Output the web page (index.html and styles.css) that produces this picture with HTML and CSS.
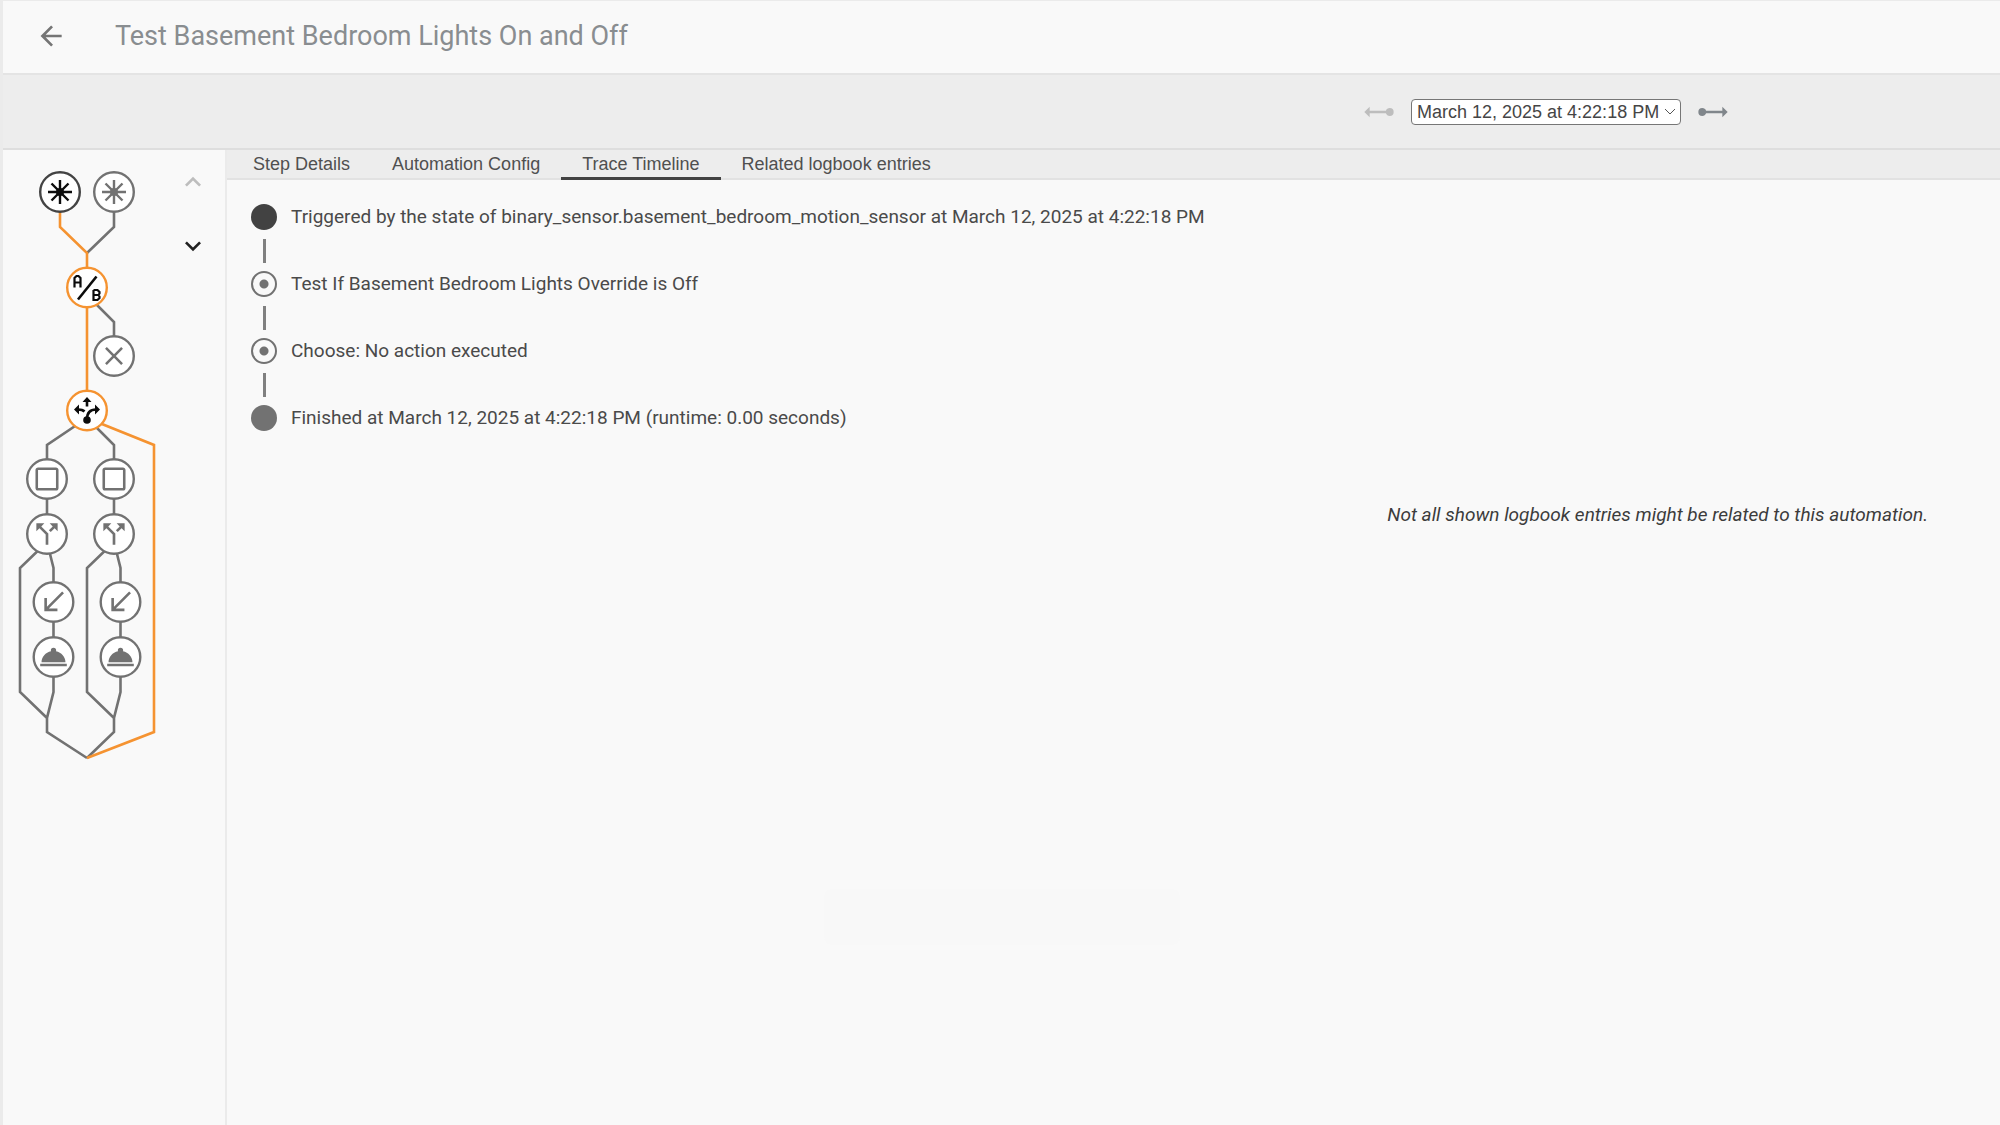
FILE: index.html
```html
<!DOCTYPE html>
<html lang="en">
<head>
<meta charset="utf-8">
<title>Test Basement Bedroom Lights On and Off</title>
<link rel="stylesheet" href="styles.css">
</head>
<body>
<svg class="defs" aria-hidden="true">
  <defs>
    <g id="asterisk"><path d="M0-12V12M-12 0H12M-8.500-8.500L8.500 8.500M8.500-8.500L-8.500 8.500" fill="none" stroke="currentColor" stroke-width="2.4"/><circle r="4" fill="currentColor"/></g>
    <g id="square" transform="scale(1.28) translate(-12 -12)"><path fill="currentColor" d="M19,3H5C3.89,3 3,3.89 3,5V19A2,2 0 0,0 5,21H19A2,2 0 0,0 21,19V5C21,3.89 20.1,3 19,3M19,5V19H5V5H19Z"/></g>
    <g id="close" transform="scale(1.28) translate(-12 -12)"><path fill="currentColor" d="M19,6.41L17.59,5L12,10.59L6.41,5L5,6.41L10.59,12L5,17.59L6.41,19L12,13.41L17.59,19L19,17.59L13.41,12L19,6.41Z"/></g>
    <g id="split" transform="scale(1.33) translate(-12 -12)"><path fill="currentColor" d="M14,4L16.29,6.29L13.41,9.17L14.83,10.59L17.71,7.71L20,10V4M10,4H4V10L6.29,7.71L11,12.41V20H13V11.59L7.71,6.29"/></g>
    <g id="received" transform="scale(1.31) translate(-12 -12)"><path fill="currentColor" d="M20,5.41L18.59,4L7,15.59V9H5V19H15V17H8.41"/></g>
    <g id="service" transform="scale(1.33) translate(-12 -12)"><path fill="currentColor" d="M12,5A2,2 0 0,1 14,7C14,7.24 13.96,7.47 13.88,7.69C17.95,8.5 21,11.91 21,16H3C3,11.91 6.05,8.5 10.12,7.69C10.04,7.47 10,7.24 10,7A2,2 0 0,1 12,5M22,19H2V17H22V19Z"/></g>
  </defs>
</svg>
<div class="app">
  <header class="header">
    <button class="icon-button back" type="button" aria-label="Back"><svg viewBox="0 0 24 24" class="icon"><path d="M20,11V13H8L13.5,18.5L12.08,19.92L4.16,12L12.08,4.08L13.5,5.5L8,11H20Z"/></svg></button>
    <h1 class="title">Test Basement Bedroom Lights On and Off</h1>
  </header>
  <div class="toolbar">
    <button class="icon-button older" type="button" aria-label="Older trace" disabled><svg viewBox="0 0 24 24" class="icon"><path d="M1,12L5,16V13H17.17C17.58,14.17 18.69,15 20,15A3,3 0 0,0 23,12A3,3 0 0,0 20,9C18.69,9 17.58,9.83 17.17,11H5V8L1,12Z"/></svg></button>
    <div class="run-picker">
      <select class="run-select" aria-label="Trace"><option>March 12, 2025 at 4:22:18 PM</option></select>
      <svg class="caret" viewBox="0 0 12 8" aria-hidden="true"><path d="M1 1L6 6L11 1"/></svg>
    </div>
    <button class="icon-button newer" type="button" aria-label="Newer trace"><svg viewBox="0 0 24 24" class="icon"><path d="M23,12L19,16V13H6.83C6.42,14.17 5.31,15 4,15A3,3 0 0,1 1,12A3,3 0 0,1 4,9C5.31,9 6.42,9.83 6.83,11H19V8L23,12Z"/></svg></button>
  </div>
  <div class="body">
    <aside class="graph-panel">
      <svg class="graph" viewBox="3 150 158 620" role="img" aria-label="Automation graph">
        <g class="wires">
          <path d="M114 192V227L87 253"/>
          <path d="M87 295L114 322V356"/>
          <path d="M87 418L47 445V534M87 418L114 445V534"/>
          <path d="M47 542L20 568V692L47 718M47 542L53.5 568V692L47 718V732L87 758"/>
          <path d="M114 542L87 568V692L114 718M114 542L120.5 568V692L114 718V732L87 758"/>
        </g>
        <g class="wires tracked">
          <path d="M60 192V227L87 253V410"/>
          <path d="M87 418L154 445V732L87 758"/>
        </g>
        <g class="node picked" transform="translate(60 192)"><circle class="ring" r="19.800"/><use href="#asterisk"/></g>
        <g class="node" transform="translate(114 192)"><circle class="ring" r="19.800"/><use href="#asterisk"/></g>
        <g class="node ran" transform="translate(87 287.500)"><circle class="ring" r="19.800"/>
          <path class="line" d="M-9 12L9.500-11"/>
          <path class="line thin" d="M-12.500 0V-9.500L-10.500-11.500H-8.500L-6.500-9.500V0M-12.500-5H-6.500M6.500 2.500V12.500H10.500L12.500 10.500V9L11.500 7.500L12.500 6V4.500L10.500 2.500H6.500M6.500 7.500H11"/></g>
        <g class="node" transform="translate(114 356)"><circle class="ring" r="19.800"/><use href="#close"/></g>
        <g class="node ran" transform="translate(87 410.500)"><circle class="ring" r="19.800"/>
          <circle cy="9.500" r="3.800" fill="currentColor"/>
          <path class="line" d="M0 9C0 2 3-1 9-1M0-4V-10M-9-1C-6-1-4-.500-2.500 1"/>
          <path fill="currentColor" d="M0-13.500L4.500-8.500H-4.500ZM13-1L8 4V-6ZM-13-1L-8 4V-6Z"/></g>
        <g class="node" transform="translate(47 479)"><circle class="ring" r="19.800"/><use href="#square"/></g>
        <g class="node" transform="translate(114 479)"><circle class="ring" r="19.800"/><use href="#square"/></g>
        <g class="node" transform="translate(47 534)"><circle class="ring" r="19.800"/><use href="#split"/></g>
        <g class="node" transform="translate(114 534)"><circle class="ring" r="19.800"/><use href="#split"/></g>
        <g class="node" transform="translate(53.500 602)"><circle class="ring" r="19.800"/><use href="#received"/></g>
        <g class="node" transform="translate(120.500 602)"><circle class="ring" r="19.800"/><use href="#received"/></g>
        <g class="node" transform="translate(53.500 657)"><circle class="ring" r="19.800"/><use href="#service"/></g>
        <g class="node" transform="translate(120.500 657)"><circle class="ring" r="19.800"/><use href="#service"/></g>
      </svg>
      <div class="steps">
        <button class="icon-button step" type="button" aria-label="Previous step" disabled><svg viewBox="0 0 24 24" class="icon"><path d="M7.41,15.41L12,10.83L16.59,15.41L18,14L12,8L6,14L7.41,15.41Z"/></svg></button>
        <button class="icon-button step" type="button" aria-label="Next step"><svg viewBox="0 0 24 24" class="icon"><path d="M7.41,8.58L12,13.17L16.59,8.58L18,10L12,16L6,10L7.41,8.58Z"/></svg></button>
      </div>
    </aside>
    <main class="info">
      <nav class="tabs" role="tablist">
        <button class="tab" type="button" role="tab">Step Details</button>
        <button class="tab" type="button" role="tab">Automation Config</button>
        <button class="tab active" type="button" role="tab" aria-selected="true">Trace Timeline</button>
        <button class="tab" type="button" role="tab">Related logbook entries</button>
      </nav>
      <ol class="timeline">
        <li class="entry"><span class="dot start"></span><span>Triggered by the state of binary_sensor.basement_bedroom_motion_sensor at March 12, 2025 at 4:22:18 PM</span></li>
        <li class="entry"><span class="dot hollow"></span><span>Test If Basement Bedroom Lights Override is Off</span></li>
        <li class="entry"><span class="dot hollow"></span><span>Choose: No action executed</span></li>
        <li class="entry"><span class="dot end"></span><span>Finished at March 12, 2025 at 4:22:18 PM (runtime: 0.00 seconds)</span></li>
      </ol>
      <p class="note">Not all shown logbook entries might be related to this automation.</p>
    </main>
  </div>
  <div class="ghost" aria-hidden="true"></div>
</div>
</body>
</html>
```
FILE: styles.css
```css
* { box-sizing: border-box; }

body {
  margin: 0;
  background: #f9f9f9;
  color: #4a4a4a;
  font: 19px/24px Roboto, "Liberation Sans", sans-serif;
}

.defs { position: absolute; width: 0; height: 0; }

.app {
  position: relative;
  display: flex;
  flex-direction: column;
  min-height: 100vh;
  border-top: 1px solid #ebebeb;
  border-left: 3px solid #ebebeb;
}

.icon-button {
  display: flex;
  align-items: center;
  justify-content: center;
  width: 64px;
  height: 64px;
  padding: 0;
  border: 0;
  background: none;
  color: #80868b;
}

.icon { width: 32px; height: 32px; fill: currentColor; }

.header {
  display: flex;
  align-items: center;
  gap: 32px;
  height: 74px;
  padding: 0 16px 2px;
  border-bottom: 2px solid #e4e4e4;
}

.back { color: #757575; }

.title {
  margin: 0;
  color: #898d90;
  font-size: 27px;
  font-weight: 400;
  line-height: 36px;
}

.toolbar {
  display: flex;
  align-items: center;
  justify-content: flex-end;
  height: 75px;
  padding-right: 255px;
  background: #ededed;
  border-bottom: 2px solid #dedede;
}

.older { color: #bdbdbd; }

.run-picker { position: relative; display: flex; }

.run-select {
  appearance: none;
  width: 270px;
  height: 26px;
  padding: 0 18px 0 5px;
  border: 1px solid #767676;
  border-radius: 4px;
  background: #fff;
  color: #454545;
  font: 18px/24px "Liberation Sans", Arial, sans-serif;
}

.caret {
  position: absolute;
  right: 5px;
  top: 9px;
  width: 12px;
  height: 8px;
  fill: none;
  stroke: #555;
}

.body { display: flex; flex: 1; }

.graph-panel {
  display: flex;
  flex: none;
  align-items: flex-start;
  border-right: 2px solid #ebebeb;
}

.graph { width: 158px; height: 620px; }

.wires { fill: none; stroke: #727272; stroke-width: 2.6; }
.wires.tracked { stroke: #f59331; }

.node { color: #727272; }
.ring { fill: #fff; stroke: currentColor; stroke-width: 2.4; }
.node.picked, .node.ran { color: #0c0c0c; }
.node.picked .ring { stroke: #444; }
.node.ran .ring { stroke: #f59331; }
.line { fill: none; stroke: currentColor; stroke-width: 2.6; }
.line.thin { stroke-width: 2.2; }

.steps { width: 64px; }
.step { color: #212121; }
.step:disabled { color: #bdbdbd; }

.info { flex: 1; min-width: 0; }

.tabs {
  display: flex;
  height: 30px;
  padding-left: 5px;
  background: #ededed;
  border-bottom: 2px solid #e2e2e2;
}

.tab {
  height: 30px;
  padding: 0 21px;
  border: 0;
  border-bottom: 3px solid transparent;
  background: none;
  color: #505050;
  font: 18px/24px "Liberation Sans", Arial, sans-serif;
}

.tab.active { border-bottom-color: #424242; }

.timeline {
  display: grid;
  gap: 41px;
  margin: 0;
  padding: 24px 24px 0;
  list-style: none;
}

.entry {
  position: relative;
  display: flex;
  align-items: center;
  gap: 14px;
  height: 26px;
}

.entry + .entry::before {
  content: "";
  position: absolute;
  left: 12px;
  top: -32px;
  width: 3px;
  height: 24px;
  background: #808080;
}

.dot { flex: none; width: 26px; height: 26px; border-radius: 50%; }
.dot.start { background: #424242; }
.dot.end { background: #727272; }
.dot.hollow {
  border: 2px solid #727272;
  background: radial-gradient(circle, #727272 4px, transparent 5px);
}

.note {
  margin: 72px 72px 0;
  color: #3c3c3c;
  font-style: italic;
  text-align: right;
}

.ghost {
  position: absolute;
  left: 50%;
  bottom: 180px;
  width: 356px;
  height: 56px;
  border-radius: 8px;
  background: #f8f8f8;
  transform: translateX(-50%);
}
```
